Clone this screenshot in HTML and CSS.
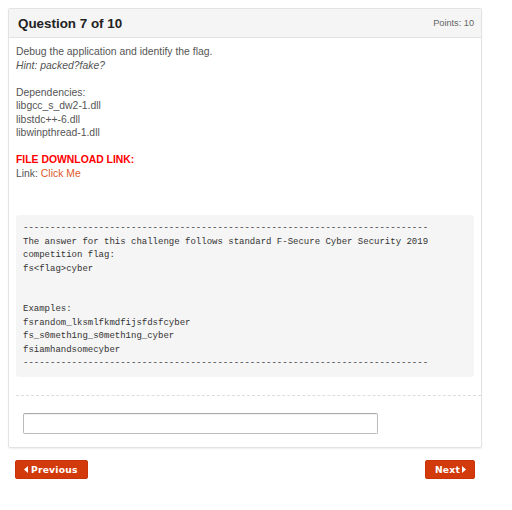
FILE: index.html
```
<!DOCTYPE html>
<html>
<head>
<meta charset="utf-8">
<link rel="stylesheet" href="styles.css">
</head>
<body>
<div class="panel">
  <div class="panel-head">
    <div class="title">Question 7 of 10</div>
    <div class="points">Points: 10</div>
  </div>
  <div class="panel-body">
    <p class="para">Debug the application and identify the flag.<br><em>Hint: packed?fake?</em></p>
    <p class="para">Dependencies:<br>libgcc_s_dw2-1.dll<br>libstdc++-6.dll<br>libwinpthread-1.dll</p>
    <p class="para"><strong class="red">FILE DOWNLOAD LINK:</strong><br>Link: <a class="link" href="#">Click Me</a></p>
    <pre class="code">---------------------------------------------------------------------------
The answer for this challenge follows standard F-Secure Cyber Security 2019
competition flag:
fs&lt;flag&gt;cyber


Examples:
fsrandom_lksmlfkmdfijsfdsfcyber
fs_s0meth1ng_s0meth1ng_cyber
fsiamhandsomecyber
---------------------------------------------------------------------------</pre>
    <div class="sep"></div>
    <div class="answer"><input class="input" type="text"></div>
  </div>
</div>
<div class="nav">
  <a class="btn" href="#"><svg class="caret" width="4" height="7" viewBox="0 0 4 7"><polygon points="4,0 4,7 0,3.5" fill="#fff"/></svg>Previous</a>
  <a class="btn btn-next" href="#">Next<svg class="caret" width="4" height="7" viewBox="0 0 4 7"><polygon points="0,0 0,7 4,3.5" fill="#fff"/></svg></a>
</div>
</body>
</html>
```
FILE: styles.css
```
html, body {
  margin: 0;
  padding: 0;
  background: #fff;
}
body {
  padding: 8px;
  font-family: "Liberation Sans", Arial, sans-serif;
  color: #555;
}
.panel {
  width: 472px;
  border: 1px solid #e3e3e3;
  border-radius: 2px;
  box-shadow: 0 1px 2px rgba(0,0,0,0.07);
  background: #fff;
}
.panel-head {
  height: 28px;
  background: #f5f5f5;
  border-bottom: 1px solid #e3e3e3;
  display: flex;
  align-items: center;
  justify-content: space-between;
  padding: 0 7px 0 9px;
}
.title {
  font-weight: bold;
  font-size: 13.4px;
  color: #222;
}
.points {
  font-size: 9.2px;
  color: #666;
}
.panel-body {
  padding: 7px 0 13px 7px;
}
.para {
  margin: 0 8px 13.5px 0;
  font-size: 10.4px;
  line-height: 13.5px;
}
.para:last-of-type {
  margin-bottom: 0;
}
.red {
  color: #ff0000;
}
.link {
  color: #e0592a;
  text-decoration: none;
}
.code {
  margin: 35px 7px 0 0;
  padding: 7px 7px 6.5px 7px;
  background: #f5f5f5;
  border-radius: 3px;
  font-family: "Liberation Mono", monospace;
  font-size: 9px;
  line-height: 13.5px;
  color: #333;
  white-space: pre;
}
.sep {
  margin-top: 18px;
  border-top: 1px dashed #ddd;
}
.answer {
  padding: 17px 0 0 7px;
}
.input {
  display: block;
  box-sizing: border-box;
  width: 355px;
  height: 21px;
  margin: 0;
  border: 1px solid #bbb;
  border-top-color: #aaa;
  border-radius: 2px;
  box-shadow: inset 0 1px 1px rgba(0,0,0,0.06);
  background: #fff;
}
.nav {
  width: 460px;
  display: flex;
  justify-content: space-between;
  padding: 12px 7px 0 7px;
}
.btn {
  display: flex;
  align-items: center;
  gap: 3px;
  box-sizing: border-box;
  height: 19px;
  padding: 0 9px 0 8px;
  background: #d33a0b;
  border: 1px solid #c83408;
  border-radius: 2px;
  color: #fff;
  text-decoration: none;
  font-family: "DejaVu Sans", Verdana, sans-serif;
  font-weight: bold;
  font-size: 9.2px;
  letter-spacing: 0.2px;
}
.btn-next {
  padding: 0 8px 0 9px;
  gap: 2px;
}
.caret {
  display: block;
}
```
